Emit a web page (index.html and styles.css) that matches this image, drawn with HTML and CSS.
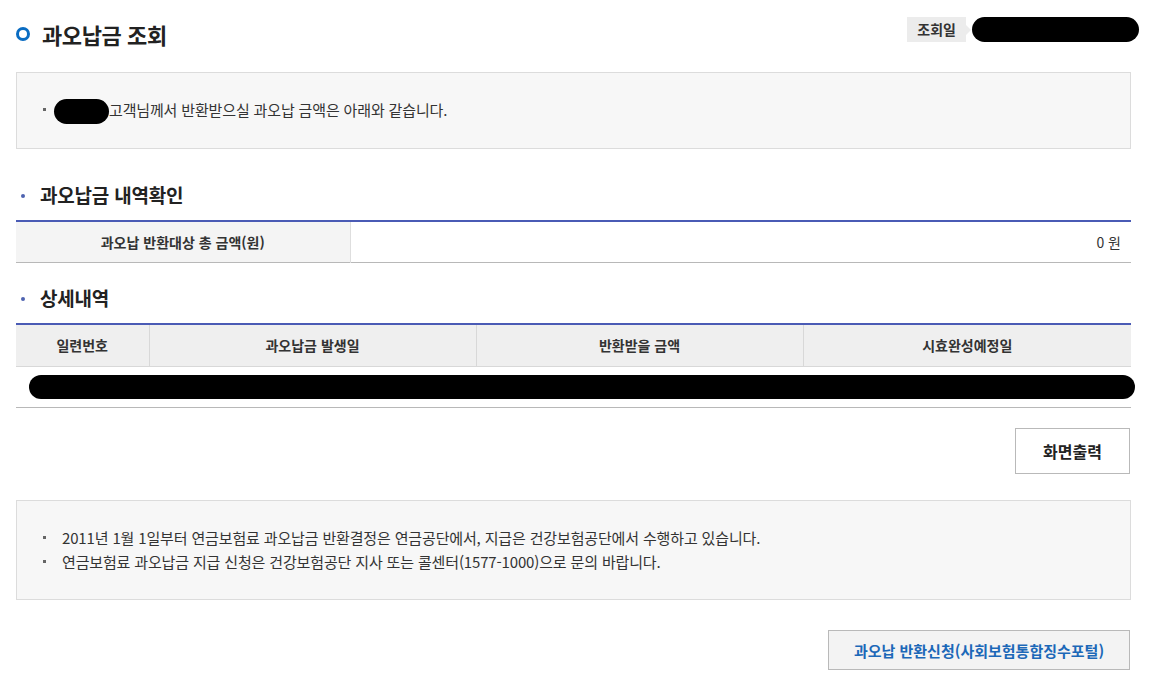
FILE: index.html
```html
<!DOCTYPE html>
<html lang="ko">
<head>
<meta charset="utf-8">
<title>과오납금 조회</title>
<link rel="stylesheet" href="styles.css">
</head>
<body>
<div class="page">
  <div class="head">
    <h2 class="title"><span class="ring"></span>과오납금 조회</h2>
    <div class="date">
      <span class="date-label">조회일</span>
      <span class="blob blob-date"></span>
    </div>
  </div>

  <div class="infobox">
    <ul class="sq-list">
      <li><span class="blob blob-name"></span>고객님께서 반환받으실 과오납 금액은 아래와 같습니다.</li>
    </ul>
  </div>

  <h3 class="sub">과오납금 내역확인</h3>
  <table class="tbl tbl-sum">
    <tr>
      <th class="sum-th">과오납 반환대상 총 금액(원)</th>
      <td class="sum-td">0 원</td>
    </tr>
  </table>

  <h3 class="sub sub2">상세내역</h3>
  <table class="tbl tbl-detail">
    <colgroup>
      <col class="c1"><col class="c2"><col class="c3"><col class="c4">
    </colgroup>
    <thead>
      <tr>
        <th>일련번호</th>
        <th>과오납금 발생일</th>
        <th>반환받을 금액</th>
        <th>시효완성예정일</th>
      </tr>
    </thead>
    <tbody>
      <tr>
        <td colspan="4" class="redact-cell"><div class="blob blob-row"></div></td>
      </tr>
    </tbody>
  </table>

  <div class="btn-row">
    <button class="btn">화면출력</button>
  </div>

  <div class="infobox notice">
    <ul class="sq-list">
      <li>2011년 1월 1일부터 연금보험료 과오납금 반환결정은 연금공단에서, 지급은 건강보험공단에서 수행하고 있습니다.</li>
      <li>연금보험료 과오납금 지급 신청은 건강보험공단 지사 또는 콜센터(1577-1000)으로 문의 바랍니다.</li>
    </ul>
  </div>

  <div class="btn-row btn-row2">
    <button class="btn btn-blue">과오납 반환신청(사회보험통합징수포털)</button>
  </div>
</div>
</body>
</html>
```

FILE: styles.css
```css
* { box-sizing: border-box; }
html, body { margin: 0; padding: 0; background: #fff; }
body {
  font-family: "Noto Sans CJK KR", "Noto Sans", sans-serif;
  color: #333;
  font-size: 14px;
}
.page { padding: 0 22px 0 16px; width: 1153px; }

.head {
  display: flex;
  justify-content: space-between;
  align-items: flex-start;
  padding-top: 17px;
}
.title {
  margin: 0;
  display: flex;
  align-items: center;
  height: 34px;
  font-size: 22px;
  font-weight: 700;
  color: #222;
  letter-spacing: -0.4px;
}
.ring {
  width: 14px; height: 14px;
  border: 3.5px solid #0a6cc2;
  border-radius: 50%;
  margin-right: 12px;
}
.date { display: flex; align-items: center; margin-right: -8px; }
.date-label {
  position: relative;
  background: #ececec;
  font-weight: 700;
  font-size: 14px;
  color: #333;
  height: 25px;
  line-height: 25px;
  padding: 0 10px;
}
.date-label::after {
  content: "";
  position: absolute;
  right: -5px; top: 8px;
  border-left: 5px solid #ececec;
  border-top: 5px solid transparent;
  border-bottom: 5px solid transparent;
}
.blob { background: #000; border-radius: 13px; display: inline-block; }
.blob-date { width: 167px; height: 25px; margin-left: 6px; }
.blob-name { width: 55px; height: 25px; vertical-align: middle; margin-left: -2px; }

.infobox {
  margin-top: 21px;
  background: #f7f7f7;
  border: 1px solid #dcdcdc;
  height: 77px;
  padding: 25px 26px;
}
.sq-list { list-style: none; margin: 0; padding: 0; }
.sq-list li {
  position: relative;
  padding-left: 13px;
  line-height: 24px;
  font-size: 15px;
  letter-spacing: -0.15px;
  color: #333;
}
.sq-list li::before {
  content: "";
  position: absolute;
  left: 0; top: 10px;
  width: 3px; height: 3px;
  background: #666;
}

.sub {
  margin: 34px 0 13px;
  font-size: 19px;
  font-weight: 700;
  color: #222;
  line-height: 24px;
  padding-left: 24px;
  position: relative;
  letter-spacing: -0.2px;
}
.sub::before {
  content: "";
  position: absolute;
  left: 5px; top: 11px;
  width: 4px; height: 4px;
  border-radius: 50%;
  background: #4e63b0;
}
.sub2 { margin-top: 23px; }

.tbl {
  width: 100%;
  border-collapse: collapse;
  border-top: 2px solid #4a5bb5;
  border-bottom: 1px solid #b8b8b8;
}
.tbl th, .tbl td { padding: 0; font-size: 14px; }
.sum-th {
  width: 334px;
  height: 41px;
  background: #f4f4f4;
  border-right: 1px solid #dedede;
  font-weight: 700;
  color: #333;
}
.sum-td { text-align: right; padding-right: 10px !important; color: #333; }

.tbl-detail { table-layout: fixed; }
.c1 { width: 133px; } .c2 { width: 327px; } .c3 { width: 327px; } .c4 { width: 328px; }
.tbl-detail thead th {
  height: 43px;
  background: #efefef;
  border-bottom: 1px solid #d8d8d8;
  border-left: 1px solid #d8d8d8;
  font-weight: 700;
  color: #333;
}
.tbl-detail thead th:first-child { border-left: 0; }
.redact-cell { height: 41px; }
.blob-row { display: block; height: 24px; margin-left: 13px; margin-right: -4px; border-radius: 12px; }

.btn-row { display: flex; justify-content: flex-end; margin-top: 20px; }
.btn {
  font-family: inherit;
  background: #fff;
  border: 1px solid #b9b9b9;
  width: 115px;
  height: 46px;
  font-size: 16px;
  font-weight: 700;
  color: #222;
  padding: 0;
  margin-right: 1px;
}
.notice { margin-top: 26px; height: 100px; }
.notice .sq-list li { padding-left: 19px; }
.btn-row2 { margin-top: 30px; }
.btn-blue {
  width: 302px;
  height: 40px;
  background: #f3f3f3;
  color: #1c68b8;
  font-size: 15px;
}
```
